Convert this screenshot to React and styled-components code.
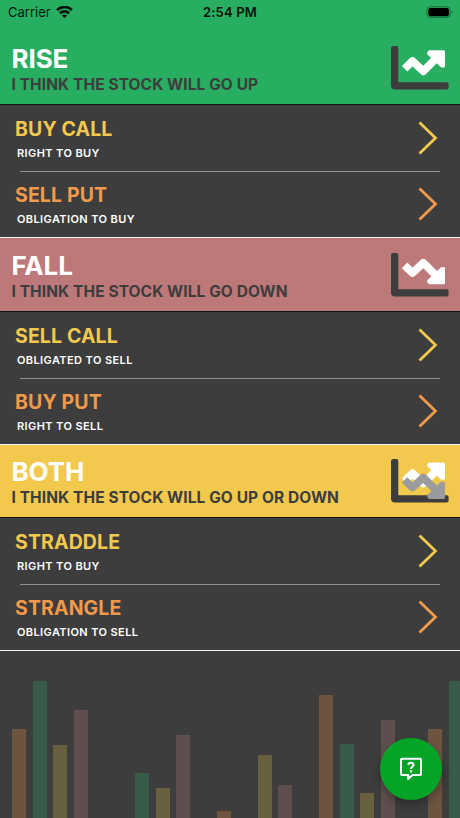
import React from "react";
import styled, { createGlobalStyle } from "styled-components";

const GlobalStyle = createGlobalStyle`
  * {
    box-sizing: border-box;
  }

  body {
    margin: 0;
    background: #3d3d3d;
    font-family: Inter, "Liberation Sans", sans-serif;
  }
`;

const colors = {
  dark: "#3d3d3d",
  green: "#27ae60",
  red: "#bd787a",
  yellow: "#f2c94c",
  orange: "#f2994a",
};

const Screen = styled.main`
  position: relative;
  display: flex;
  flex-direction: column;
  width: 100%;
  height: 100vh;
  overflow: hidden;
  background: ${colors.dark};
`;

const StatusBar = styled.header`
  display: grid;
  grid-template-columns: 1fr auto 1fr;
  align-items: center;
  height: 24px;
  flex-shrink: 0;
  padding: 0 6px 0 8px;
  background: ${colors.green};
  color: #06140b;
  font-size: 13px;
`;

const Carrier = styled.div`
  display: flex;
  align-items: center;
  gap: 5px;
`;

const Time = styled.div`
  margin-right: 2px;
  font-weight: 600;
  letter-spacing: 0.2px;
`;

const Battery = styled.svg`
  justify-self: end;
  width: 28px;
  height: 13px;
`;

const Section = styled.section`
  flex-shrink: 0;
  border-bottom: 1px solid #f4f4f4;
`;

const Banner = styled.div`
  display: flex;
  justify-content: space-between;
  height: ${(props) => props.$height}px;
  padding: ${(props) => props.$top}px 11px 0 11.5px;
  background: ${(props) => props.$color};
  border-bottom: 1px solid #111;
`;

const BannerTitle = styled.h1`
  margin: 0;
  color: #fff;
  font-size: 26px;
  font-weight: 700;
  line-height: 30px;
  letter-spacing: -0.1px;
`;

const BannerText = styled.p`
  margin: 0;
  color: ${colors.dark};
  font-size: 15.5px;
  font-weight: 650;
  line-height: 21px;
  letter-spacing: 0.08px;
  white-space: nowrap;
`;

const ChartIcon = styled.svg`
  width: 58px;
  height: 44px;
  margin-top: 2px;
  flex-shrink: 0;
`;

const Row = styled.div`
  display: flex;
  justify-content: space-between;
  height: 66px;
  padding: 12px 22px 0 15px;
`;

const Divider = styled.hr`
  height: 1px;
  margin: 0 20px -1px;
  border: 0;
  background: #8e8e8e;
`;

const RowTitle = styled.h2`
  margin: 0;
  color: ${(props) => props.$color};
  font-size: 19.5px;
  font-weight: 650;
  line-height: 24px;
  letter-spacing: 0.12px;
`;

const RowText = styled.p`
  margin: 5px 0 0 2px;
  color: #fff;
  font-size: 11px;
  font-weight: 600;
  line-height: 14px;
  letter-spacing: 0.4px;
`;

const Chevron = styled.svg`
  width: 20px;
  height: 34px;
  margin-top: 4px;
`;

const Bars = styled.div`
  display: flex;
  flex: 1;
  align-items: flex-end;
  gap: 6.47px;
  padding-left: 12.3px;
  overflow: hidden;
`;

const Bar = styled.div`
  flex: 0 0 14px;
  height: ${(props) => props.$height}px;
  margin-right: ${(props) => props.$space || 0}px;
  background: ${(props) => props.$color};
`;

const HelpButton = styled.button`
  position: absolute;
  right: 18px;
  bottom: 18px;
  display: flex;
  align-items: center;
  justify-content: center;
  width: 62.5px;
  height: 62.5px;
  padding: 0;
  border: 0;
  border-radius: 50%;
  background: #04a527;
  box-shadow: 0 5px 10px rgba(0, 0, 0, 0.28);
`;

const sections = [
  {
    title: "RISE",
    text: "I THINK THE STOCK WILL GO UP",
    color: colors.green,
    height: 81,
    top: 20,
    trend: "up",
    rows: [
      ["BUY CALL", "RIGHT TO BUY"],
      ["SELL PUT", "OBLIGATION TO BUY"],
    ],
  },
  {
    title: "FALL",
    text: "I THINK THE STOCK WILL GO DOWN",
    color: colors.red,
    height: 73.6,
    top: 12.5,
    trend: "down",
    rows: [
      ["SELL CALL", "OBLIGATED TO SELL"],
      ["BUY PUT", "RIGHT TO SELL"],
    ],
  },
  {
    title: "BOTH",
    text: "I THINK THE STOCK WILL GO UP OR DOWN",
    color: colors.yellow,
    height: 73.4,
    top: 12.3,
    trend: "both",
    rows: [
      ["STRADDLE", "RIGHT TO BUY"],
      ["STRANGLE", "OBLIGATION TO SELL"],
    ],
  },
];

const brown = "#6c543f";
const teal = "#375b48";
const olive = "#69603f";
const mauve = "#5f4e4e";

const bars = [
  [brown, 89],
  [teal, 137],
  [olive, 73],
  [mauve, 108],
  ["transparent", 0],
  ["transparent", 0],
  [teal, 45],
  [olive, 30],
  [mauve, 83],
  ["transparent", 0],
  [brown, 7],
  ["transparent", 0],
  [olive, 63],
  [mauve, 33],
  ["transparent", 0],
  [brown, 123],
  [teal, 74],
  [olive, 25],
  [mauve, 98, 27.1],
  [brown, 89],
  [teal, 137],
];

const UpArrow = () => (
  <g fill="#fff" stroke="#fff" strokeLinejoin="round">
    <path d="M13.6 22.8 L21.5 15 L32.3 25.3 L46 11.5" fill="none" strokeWidth="7.8" />
    <path d="M38.5 5.7 H52.5 V20 H50.8 L37.5 7.3 Z" strokeWidth="3" />
  </g>
);

const DownArrow = ({ color }) => (
  <g fill={color} stroke={color} strokeLinejoin="round">
    <path d="M13.6 12.3 L21.5 19.8 L32.3 9.8 L46 23.5" fill="none" strokeWidth="7.8" />
    <path d="M38.5 29.8 H52.5 V15.5 H50.8 L37.5 28.2 Z" strokeWidth="3" />
  </g>
);

const TrendIcon = ({ trend }) => (
  <ChartIcon viewBox="0 0 58 44">
    <path
      d="M2 0 H5.5 Q7.3 0 7.3 2 V36.3 H56 Q57.6 36.3 57.6 38 V41.7 Q57.6 43.4 56 43.4 H4 Q0 43.4 0 39.4 V2 Q0 0 2 0 Z"
      fill={colors.dark}
    />
    {trend !== "down" && (
      <g transform={trend === "both" ? "translate(0 -0.8)" : undefined}>
        <UpArrow />
      </g>
    )}
    {trend === "down" && <DownArrow color="#fff" />}
    {trend === "both" && (
      <g transform="translate(0 8.7)">
        <DownArrow color="#999b9d" />
      </g>
    )}
  </ChartIcon>
);

const App = () => {
  return (
    <Screen>
      <GlobalStyle />
      <StatusBar>
        <Carrier>
          Carrier
          <svg width="17" height="13" viewBox="0 0 17 13" fill="none" stroke="#06140b" strokeWidth="2.6">
            <path d="M1 4 C5.3 -0.1 11.7 -0.1 16 4" />
            <path d="M3.9 7.2 C6.5 4.7 10.5 4.7 13.1 7.2" />
            <path d="M8.5 12 L5.9 9.5 C7.4 8.1 9.6 8.1 11.1 9.5 Z" fill="#06140b" stroke="none" />
          </svg>
        </Carrier>
        <Time>2:54 PM</Time>
        <Battery viewBox="0 0 28 13">
          <rect x="0.9" y="0.8" width="23.4" height="10.6" rx="3.4" fill="none" stroke="#176c3b" />
          <rect x="2.3" y="2" width="20.6" height="8.2" rx="2" fill="#000" />
          <path d="M25.6 4.2 Q27.6 6 25.6 7.8 Z" fill="#176c3b" />
        </Battery>
      </StatusBar>

      {sections.map((section) => (
        <Section key={section.title}>
          <Banner $color={section.color} $height={section.height} $top={section.top}>
            <div>
              <BannerTitle>{section.title}</BannerTitle>
              <BannerText>{section.text}</BannerText>
            </div>
            <TrendIcon trend={section.trend} />
          </Banner>
          {section.rows.map(([title, text], index) => (
            <React.Fragment key={title}>
              {index > 0 && <Divider />}
              <Row>
                <div>
                  <RowTitle $color={index ? colors.orange : colors.yellow}>{title}</RowTitle>
                  <RowText>{text}</RowText>
                </div>
                <Chevron viewBox="0 0 20 34" fill="none">
                  <path
                    d="M1.5 1.5 L17.5 17 L1.5 32.5"
                    stroke={index ? colors.orange : colors.yellow}
                    strokeWidth="2.8"
                  />
                </Chevron>
              </Row>
            </React.Fragment>
          ))}
        </Section>
      ))}

      <Bars>
        {bars.map(([color, height, space], index) => (
          <Bar key={index} $color={color} $height={height} $space={space} />
        ))}
      </Bars>

      <HelpButton aria-label="Help">
        <svg width="24" height="24" viewBox="0 0 24 24" fill="none" stroke="#fff" strokeWidth="2">
          <path
            d="M3 1.7 H21 Q22 1.7 22 2.7 V17 Q22 18 21 18 H13.5 L9.2 22 V18 H3 Q2 18 2 17 V2.7 Q2 1.7 3 1.7 Z"
            strokeLinejoin="round"
          />
          <path d="M9.3 7.8 C9.6 4.8 14.6 5 14.5 7.9 C14.4 9.8 12 9.7 12 12" strokeWidth="2" />
          <path d="M12 13.3 V15.5" strokeWidth="2.2" />
        </svg>
      </HelpButton>
    </Screen>
  );
};

export default App;
